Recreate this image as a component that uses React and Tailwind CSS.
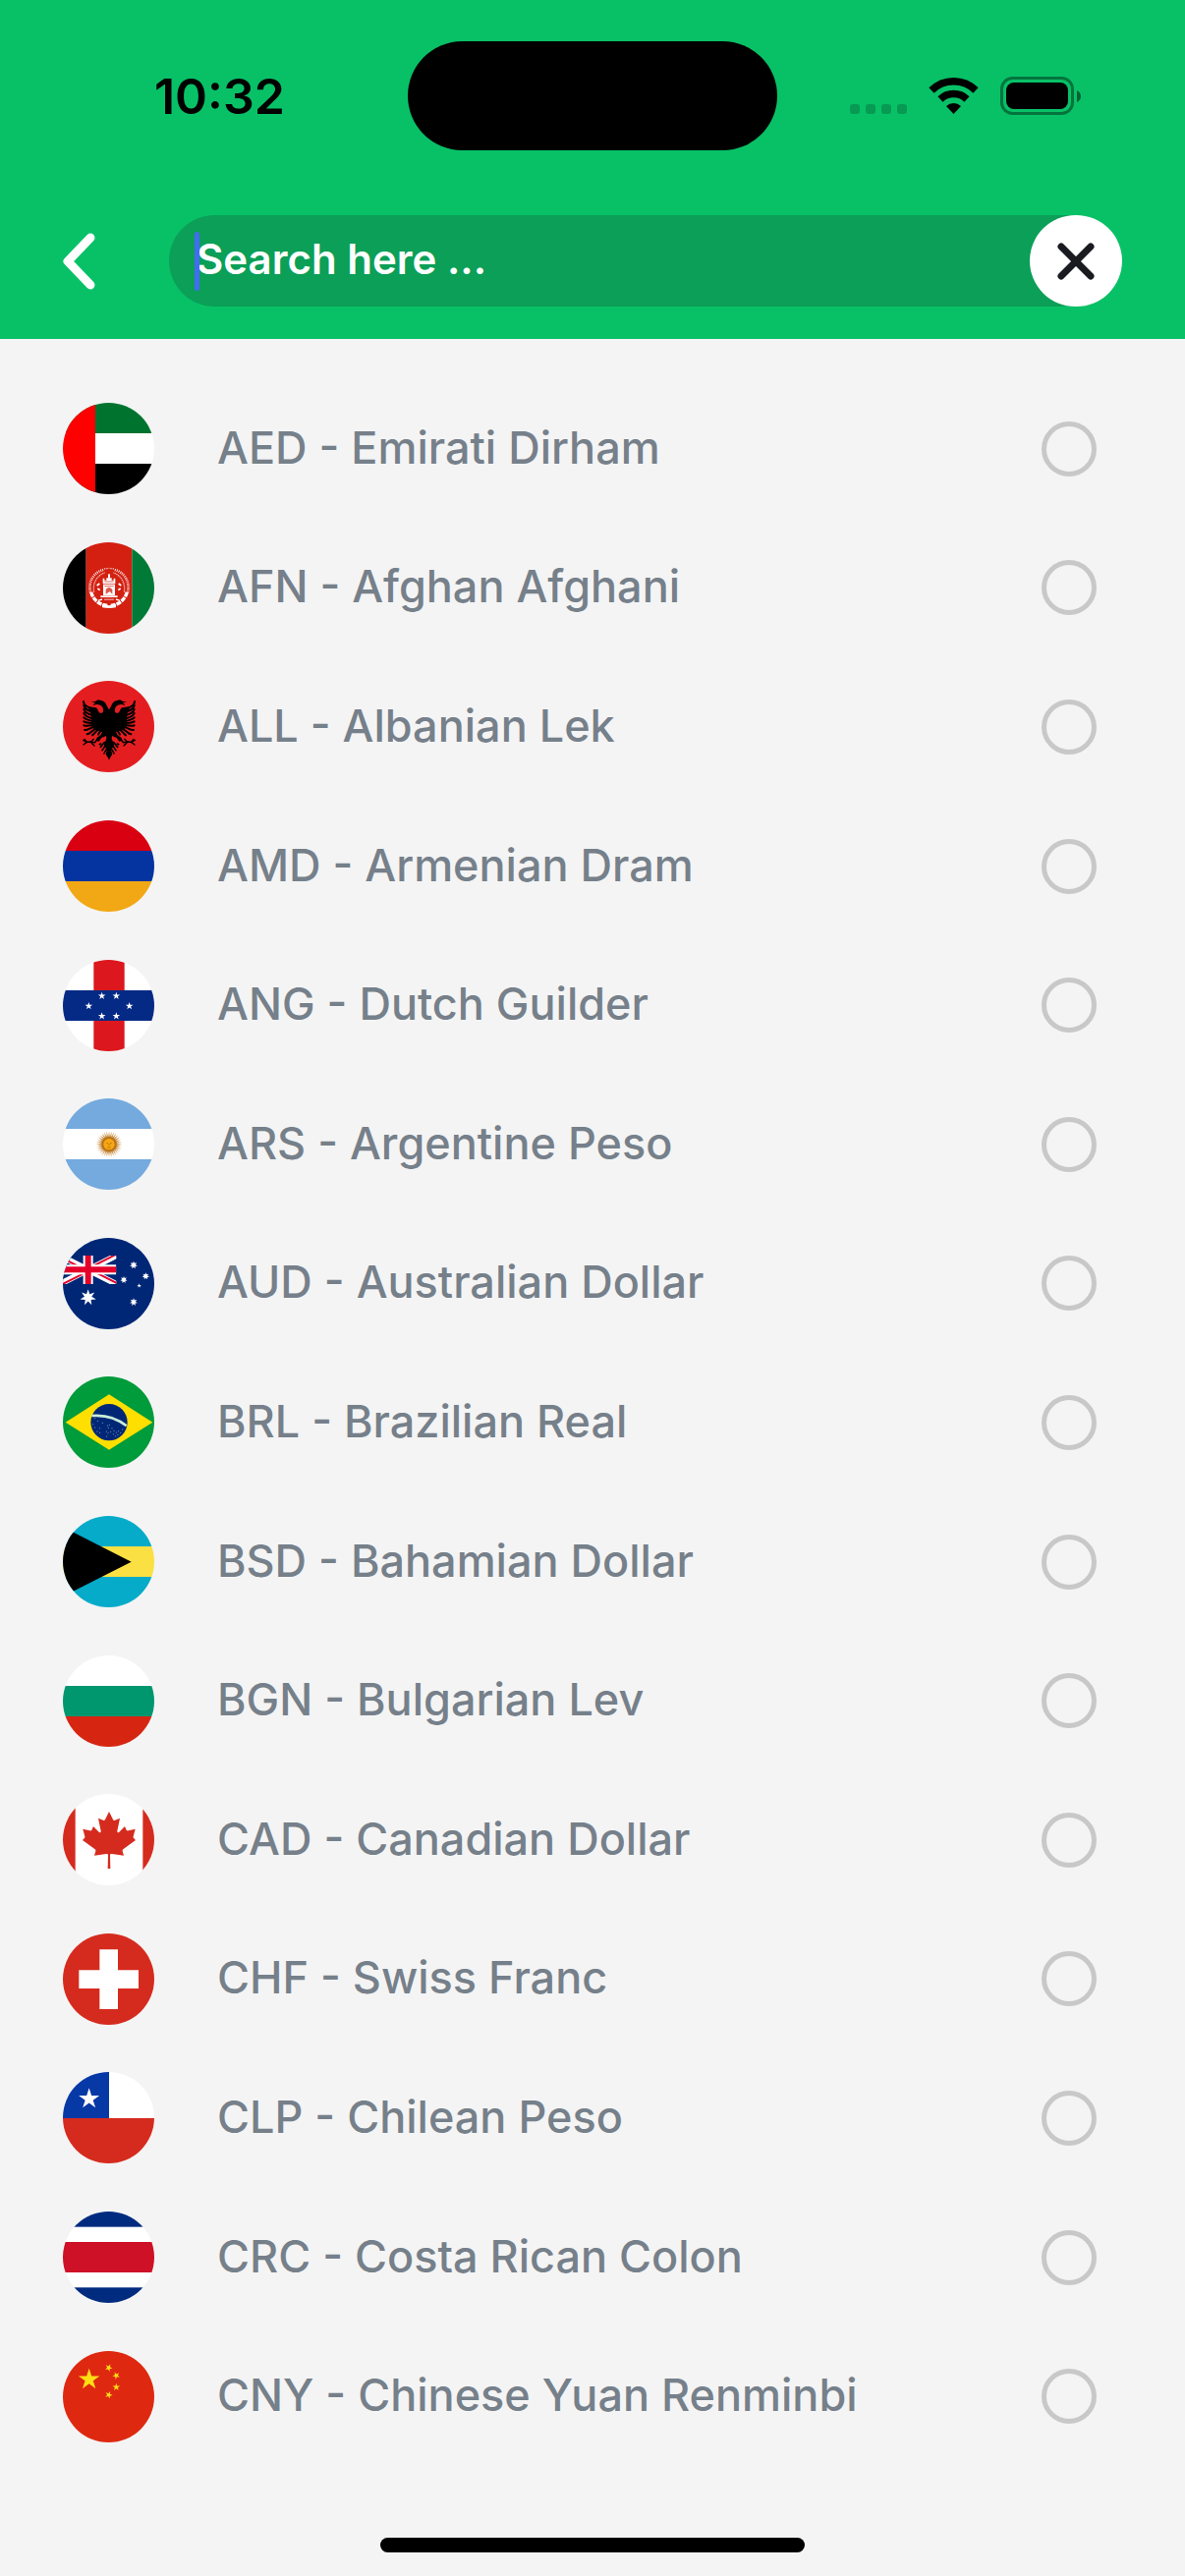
import React from "react";

const FONT = "font-['Inter','Liberation_Sans',sans-serif]";

// Points of a star with `n` tips around (cx, cy); `turn` is in degrees.
function starPoints(cx, cy, r, n = 5, ratio = 0.382, turn = 0) {
  const pts = [];
  for (let i = 0; i < n * 2; i++) {
    const a = (Math.PI * i) / n - Math.PI / 2 + (turn * Math.PI) / 180;
    const d = i % 2 ? r * ratio : r;
    pts.push(`${(cx + d * Math.cos(a)).toFixed(1)},${(cy + d * Math.sin(a)).toFixed(1)}`);
  }
  return pts.join(" ");
}

function Star({ x, y, r, n, ratio, turn, fill = "#fff" }) {
  return <polygon points={starPoints(x, y, r, n, ratio, turn)} fill={fill} />;
}

function Bands({ colors }) {
  return colors.map((c, i) => <rect key={i} y={i * 93} width="279" height="93" fill={c} />);
}

function FlagAED() {
  return (
    <>
      <Bands colors={["#00732f", "#fff", "#000"]} />
      <rect width="99" height="279" fill="#f00" />
    </>
  );
}

function AfghanHalf() {
  return (
    <g fill="none" stroke="#fff">
      <path d="M136 193C110 192 92 174 86 152" strokeWidth="10" strokeDasharray="15 3" />
      <path d="M84 152C76 120 96 90 124 84" strokeWidth="8" strokeDasharray="3 3" opacity="0.85" />
      <path d="M95 152C90 122 106 100 128 93" strokeWidth="4" strokeDasharray="4 2" opacity="0.7" />
      <path d="M126 81L141 79" strokeWidth="4" strokeDasharray="3 2" opacity="0.7" />
      <path d="M104 132l8-6M106 141l7 5" strokeWidth="5" />
      <path d="M108 178l12-4" strokeWidth="4" />
    </g>
  );
}

function FlagAFN() {
  return (
    <>
      <rect width="71" height="279" fill="#000" />
      <rect x="71" width="140" height="279" fill="#d32011" />
      <rect x="211" width="68" height="279" fill="#007a36" />
      <AfghanHalf />
      <g transform="translate(282 0) scale(-1 1)">
        <AfghanHalf />
      </g>
      <g fill="#fff">
        <path d="M122 126v-16h5v6h6v-7h16v7h6v-6h5v16z" />
        <rect x="138" y="97" width="6" height="12" />
        <rect x="123" y="128" width="36" height="34" />
        <rect x="115" y="163" width="52" height="5" />
        <rect x="126" y="173" width="30" height="3" opacity="0.7" />
        <path d="M120 190q21 5 42 0v9q-21 4-42 0z" />
      </g>
      <path d="M131 158v-14q10-12 20 0v14l-8-8z" fill="#d32011" opacity="0.75" />
      <path d="M127 134h28M127 120h28" stroke="#d32011" strokeWidth="2" />
    </>
  );
}

function EagleHalf() {
  return (
    <g>
      <path
        fill="#000"
        d="M142 90L134 76C131 67 126 61 116 60C109 57 102 59 99 63C94 62 89 63 86 66C93 65 97 66 100 67C96 69 93 72 92 75C99 71 105 71 109 73C117 74 122 79 123 87C125 95 120 100 113 98C107 95 108 86 101 82C94 79 86 82 78 78L80 92L86 100L88 140C96 150 104 150 110 152L120 156L115 166L104 173L100 182L110 185L118 174L132 168L133 178L127 190L125 204L131 204L134 214L131 224L141 240L144 236V90Z"
      />
      <g fill="none" stroke="#000" strokeWidth="6" strokeLinecap="round">
        <path d="M63 63C63 74 72 80 88 84" />
        <path d="M64 75C66 87 76 91 90 95" />
        <path d="M64 87C67 98 76 101 90 105" />
        <path d="M64 99C68 109 77 111 90 115" />
        <path d="M64 112C70 119 78 119 90 123" />
        <path d="M64 124C71 129 80 127 92 130" />
        <path d="M64 136C72 140 82 134 94 136" />
        <path d="M66 150C76 152 84 142 98 140" />
        <path d="M74 163C84 162 88 150 102 146" />
        <path d="M90 166C97 162 98 154 110 148" />
        <path d="M108 164C110 160 112 154 118 152" />
      </g>
      <g fill="none" stroke="#000" strokeWidth="4" strokeLinecap="round">
        <path d="M62 181L72 187L84 186L98 188L104 180" />
        <path d="M63 195L74 187L66 178M84 186L96 198M86 186L94 178" />
        <path d="M127 188L115 202M130 198L120 212M132 210L126 222M116 192L112 194" strokeWidth="5" />
      </g>
    </g>
  );
}

function FlagALL() {
  return (
    <>
      <rect width="279" height="279" fill="#e41e20" />
      <EagleHalf />
      <g transform="translate(282 0) scale(-1 1)">
        <EagleHalf />
      </g>
    </>
  );
}

function FlagAMD() {
  return <Bands colors={["#d90012", "#0533a0", "#f2a814"]} />;
}

function FlagANG() {
  const stars = [[119, 110], [163, 110], [79, 141], [203, 141], [119, 172], [163, 172]];
  return (
    <>
      <rect width="279" height="279" fill="#fff" />
      <rect x="94" width="94" height="279" fill="#dc171d" />
      <rect y="93" width="279" height="93" fill="#052a85" />
      {stars.map(([x, y]) => (
        <Star key={`${x}-${y}`} x={x} y={y} r={12} />
      ))}
    </>
  );
}

function FlagARS() {
  return (
    <>
      <Bands colors={["#74aade", "#fff", "#74aade"]} />
      <Star x={141} y={140} r={40} n={32} ratio={0.6} fill="#cf9a55" />
      <circle cx="141" cy="140" r="23" fill="#b8731c" />
      <circle cx="141" cy="140" r="17" fill="#f6a810" />
      <path d="M133 137h5M144 137h5M141 138v6M136 149q5 3 10 0" stroke="#9a5a12" strokeWidth="2" fill="none" />
    </>
  );
}

function FlagAUD() {
  return (
    <>
      <rect width="279" height="279" fill="#002776" />
      <svg x="-9" y="54" width="172" height="87" viewBox="0 0 172 87">
        <rect width="172" height="87" fill="#002776" />
        <path d="M0 0L172 87M172 0L0 87" stroke="#fff" strokeWidth="18" />
        <path d="M-2 3L84 47M174 84L88 41M170 -3L84 41M2 90L88 47" stroke="#e4002b" strokeWidth="6" />
        <path d="M86 0V87M0 43H172" stroke="#fff" strokeWidth="30" />
        <path d="M86 0V87M0 43H172" stroke="#e4002b" strokeWidth="18" />
      </svg>
      <Star x={77} y={182} r={25} n={7} ratio={0.45} />
      <Star x={216} y={83} r={12} n={7} ratio={0.5} />
      <Star x={186} y={128} r={11} n={7} ratio={0.5} />
      <Star x={253} y={117} r={11} n={7} ratio={0.5} />
      <Star x={216} y={196} r={12} n={7} ratio={0.5} />
      <Star x={233} y={146} r={7} />
    </>
  );
}

function FlagBRL() {
  const stars = [
    [98, 128], [106, 136], [92, 146], [98, 156], [112, 158], [121, 142], [136, 150], [142, 148], [139, 157],
    [150, 158], [133, 168], [138, 173], [146, 169], [156, 166], [163, 171], [170, 167], [176, 172], [168, 178],
    [182, 162], [154, 176], [113, 172], [105, 168], [161, 182], [158, 129], [134, 183],
  ];
  return (
    <>
      <rect width="279" height="279" fill="#009b3a" />
      <path d="M8 140L141 55L274 140L141 224Z" fill="#fedf00" />
      <circle cx="141" cy="140" r="56" fill="#002776" />
      <path d="M88 120Q150 115 194 151" stroke="#c9ecd8" strokeWidth="8" fill="none" />
      {stars.map(([x, y]) => (
        <circle key={`${x}-${y}`} cx={x} cy={y} r="1.5" fill="#a9b8d8" />
      ))}
    </>
  );
}

function FlagBSD() {
  return (
    <>
      <Bands colors={["#05abc9", "#fae042", "#05abc9"]} />
      <path d="M0 34L209 140L0 246Z" fill="#000" />
    </>
  );
}

function FlagBGN() {
  return <Bands colors={["#fff", "#00966e", "#d62612"]} />;
}

function FlagCAD() {
  return (
    <>
      <rect width="279" height="279" fill="#fff" />
      <rect width="38" height="279" fill="#d52b1e" />
      <rect x="244" width="35" height="279" fill="#d52b1e" />
      <path
        fill="#d52b1e"
        d="M141 54L153 78Q155 82 159 80L174 74L166 113Q166 121 172 116L189 99L194 110Q196 113 200 112L221 107L215 130Q214 134 217 136L222 141L184 169Q181 171 182 175L186 188L150 183Q144 182 144 186L145 228H137L138 186Q138 182 132 183L96 188L100 175Q101 171 98 169L60 141L65 136Q68 134 67 130L61 107L82 112Q86 113 88 110L93 99L110 116Q116 121 116 113L108 74L123 80Q127 82 129 78Z"
      />
    </>
  );
}

function FlagCHF() {
  return (
    <>
      <rect width="279" height="279" fill="#d52b1e" />
      <path d="M112 49H168V112H231V168H168V231H112V168H49V112H112Z" fill="#fff" />
    </>
  );
}

function FlagCLP() {
  return (
    <>
      <rect width="279" height="279" fill="#fff" />
      <rect width="141" height="141" fill="#0639a6" />
      <rect y="141" width="279" height="138" fill="#d52b1e" />
      <Star x={80} y={82} r={33} />
    </>
  );
}

function FlagCRC() {
  return (
    <>
      <Bands colors={["#fff", "#ce1126", "#fff"]} />
      <rect width="279" height="47" fill="#002b7f" />
      <rect y="232" width="279" height="47" fill="#002b7f" />
    </>
  );
}

function FlagCNY() {
  return (
    <>
      <rect width="279" height="279" fill="#de2910" />
      <Star x={80} y={87} r={34} fill="#ffde14" />
      <Star x={140} y={51} r={12} turn={24} fill="#ffde14" />
      <Star x={163} y={75} r={12} turn={46} fill="#ffde14" />
      <Star x={163} y={110} r={12} fill="#ffde14" />
      <Star x={140} y={134} r={12} turn={22} fill="#ffde14" />
    </>
  );
}

const CURRENCIES = [
  ["AED", "Emirati Dirham", FlagAED],
  ["AFN", "Afghan Afghani", FlagAFN],
  ["ALL", "Albanian Lek", FlagALL],
  ["AMD", "Armenian Dram", FlagAMD],
  ["ANG", "Dutch Guilder", FlagANG],
  ["ARS", "Argentine Peso", FlagARS],
  ["AUD", "Australian Dollar", FlagAUD],
  ["BRL", "Brazilian Real", FlagBRL],
  ["BSD", "Bahamian Dollar", FlagBSD],
  ["BGN", "Bulgarian Lev", FlagBGN],
  ["CAD", "Canadian Dollar", FlagCAD],
  ["CHF", "Swiss Franc", FlagCHF],
  ["CLP", "Chilean Peso", FlagCLP],
  ["CRC", "Costa Rican Colon", FlagCRC],
  ["CNY", "Chinese Yuan Renminbi", FlagCNY],
];

function StatusBar() {
  return (
    <div className="grid grid-cols-[1fr_376px_1fr] items-center">
      <div className="pl-8 text-center text-[50px] leading-[60px] font-semibold text-black">10:32</div>
      <div className="h-[111px] rounded-full bg-black" />
      <div className="flex items-center justify-center pr-8">
        <svg width="236" height="40" viewBox="0 0 236 40" aria-hidden="true">
          <g fill="#000" fillOpacity="0.2">
            <rect x="0" y="28" width="10" height="10" rx="3" />
            <rect x="16" y="28" width="10" height="10" rx="3" />
            <rect x="32" y="28" width="10" height="10" rx="3" />
            <rect x="48" y="28" width="10" height="10" rx="3" />
          </g>
          <g fill="none" stroke="#000" strokeWidth="7.5">
            <path d="M83 14A32 32 0 0 1 128 14" />
            <path d="M92 23A19.5 19.5 0 0 1 119 23" />
          </g>
          <path d="M105.5 38L98 30A11 11 0 0 1 113 30Z" fill="#000" />
          <rect x="154.5" y="1.500" width="72" height="36" rx="11" fill="none" stroke="#000" strokeOpacity="0.4" strokeWidth="3" />
          <rect x="159" y="6" width="63" height="27" rx="8" fill="#000" />
          <path d="M231 14Q235 16 235 20T231 26Z" fill="#000" fillOpacity="0.5" />
        </svg>
      </div>
    </div>
  );
}

function SearchBar() {
  return (
    <div className="mt-[66px] flex items-center px-16">
      <button type="button" aria-label="Back" className="w-[108px] shrink-0">
        <svg width="34" height="58" viewBox="0 0 34 58" fill="none" stroke="#fff" strokeWidth="9" strokeLinecap="round" strokeLinejoin="round" aria-hidden="true">
          <path d="M28 5L5 29L28 53" />
        </svg>
      </button>
      <div className="relative flex h-[93px] min-w-0 flex-1 items-center rounded-full bg-[#0b9f57]">
        <input
          type="text"
          aria-label="Search currencies"
          placeholder="Search here ..."
          className="h-full min-w-0 flex-1 bg-transparent pb-1 pl-7 text-[42px] font-semibold text-white outline-none placeholder:text-white placeholder:opacity-100"
        />
        <span className="absolute top-[17px] left-[26px] h-[60px] w-[5px] rounded-full bg-[#436cf0]" />
        <button type="button" aria-label="Clear search" className="flex h-[93px] w-[94px] shrink-0 items-center justify-center rounded-full bg-white">
          <svg width="38" height="38" viewBox="0 0 38 38" fill="none" stroke="#1a1b20" strokeWidth="7" strokeLinecap="round" aria-hidden="true">
            <path d="M4 4L34 34M34 4L4 34" />
          </svg>
        </button>
      </div>
    </div>
  );
}

function CurrencyRow({ code, name, Flag }) {
  return (
    <li className="flex">
      <label className="flex flex-1 items-center pr-[90px] pl-16">
        <svg viewBox="0 0 279 279" className="size-[93px] shrink-0 rounded-full" aria-hidden="true">
          <Flag />
        </svg>
        <span className="ml-16 flex-1 pb-[2px] text-[45px] leading-[56px] font-medium text-[#76808a]">
          {code} - {name}
        </span>
        <input type="radio" name="currency" value={code} className="size-14 shrink-0 appearance-none rounded-full border-[5px] border-[#c8c8c8] checked:border-[#08c167]" />
      </label>
    </li>
  );
}

export default function App() {
  return (
    <div className={`flex min-h-screen flex-col bg-[#f4f4f4] ${FONT}`}>
      <header className="bg-[#08c167] pt-[42px] pb-[33px]">
        <StatusBar />
        <SearchBar />
      </header>
      <main className="flex flex-1 flex-col pt-[41px]">
        <ul className="grid flex-1 auto-rows-fr">
          {CURRENCIES.map(([code, name, Flag]) => (
            <CurrencyRow key={code} code={code} name={name} Flag={Flag} />
          ))}
        </ul>
      </main>
      <footer className="flex h-28 items-end justify-center pb-6">
        <div className="h-[15px] w-[432px] rounded-full bg-black" />
      </footer>
    </div>
  );
}
